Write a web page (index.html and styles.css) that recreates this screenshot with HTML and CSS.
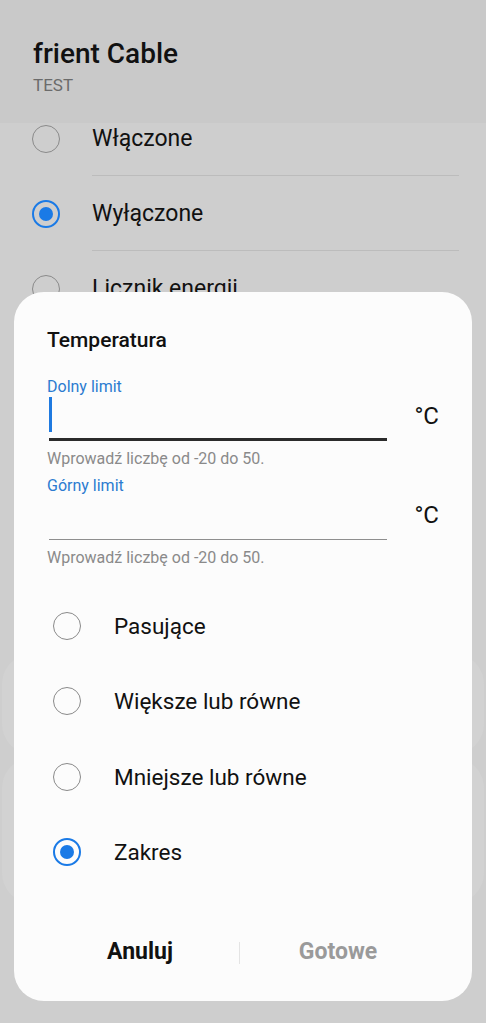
FILE: index.html
```html
<!DOCTYPE html>
<html lang="pl">
<head>
  <meta charset="UTF-8">
  <meta name="viewport" content="width=device-width, initial-scale=1.0">
  <title>frient Cable</title>
  <link rel="stylesheet" href="styles.css">
</head>
<body>
  <div class="screen">
    <div class="header">
      <h1>frient Cable</h1>
      <div class="subtitle">TEST</div>
    </div>

    <div class="list">
      <div class="row">
        <span class="radio"></span>
        <div class="row-label">Włączone</div>
      </div>
      <div class="row">
        <span class="radio checked"></span>
        <div class="row-label">Wyłączone</div>
      </div>
      <div class="row">
        <span class="radio"></span>
        <div class="row-label last">Licznik energii</div>
      </div>
    </div>

    <div class="bg-cards">
      <div class="bg-card first"></div>
      <div class="bg-card second"></div>
    </div>

    <div class="dialog">
      <h2>Temperatura</h2>

      <div class="field">
        <label class="field-label">Dolny limit</label>
        <div class="field-row">
          <div class="field-input focused"><span class="cursor"></span></div>
          <span class="unit">°C</span>
        </div>
        <div class="hint">Wprowadź liczbę od -20 do 50.</div>
      </div>

      <div class="field">
        <label class="field-label">Górny limit</label>
        <div class="field-row">
          <div class="field-input"></div>
          <span class="unit">°C</span>
        </div>
        <div class="hint">Wprowadź liczbę od -20 do 50.</div>
      </div>

      <div class="options">
        <div class="option"><span class="radio"></span><span>Pasujące</span></div>
        <div class="option"><span class="radio"></span><span>Większe lub równe</span></div>
        <div class="option"><span class="radio"></span><span>Mniejsze lub równe</span></div>
        <div class="option"><span class="radio checked"></span><span>Zakres</span></div>
      </div>

      <div class="actions">
        <button class="btn">Anuluj</button>
        <span class="sep"></span>
        <button class="btn disabled">Gotowe</button>
      </div>
    </div>
  </div>
</body>
</html>
```

FILE: styles.css
```css
body {
  margin: 0;
  font-family: Roboto, "Noto Sans", Arial, sans-serif;
  background-color: #cecece;
  color: #111;
}
.screen {
  position: relative;
  width: 486px;
  height: 1023px;
  overflow: hidden;
  background-color: #cecece;
}
.header {
  position: relative;
  z-index: 1;
  height: 123px;
  box-sizing: border-box;
  padding: 37px 33px 0;
  background-color: #c9c9c9;
}
.header h1 {
  margin: 0;
  font-size: 28px;
  line-height: 34px;
  font-weight: 500;
  color: #111;
}
.subtitle {
  font-size: 17px;
  line-height: 20px;
  color: #6b6b6b;
  margin-top: 4px;
}
.list {
  margin-top: -22px;
  padding: 0 27px 0 32px;
}
.row {
  display: flex;
  align-items: center;
  height: 75px;
}
.row-label {
  flex: 1;
  align-self: stretch;
  display: flex;
  align-items: center;
  margin-left: 32px;
  font-size: 23px;
  border-bottom: 1px solid #bcbcbc;
}
.row-label.last {
  border-bottom: none;
}
.radio {
  flex: none;
  width: 28px;
  height: 28px;
  box-sizing: border-box;
  border: 1.5px solid #8a8a8a;
  border-radius: 50%;
  display: flex;
  align-items: center;
  justify-content: center;
}
.radio.checked {
  border: 2px solid #1a7ae6;
}
.radio.checked::after {
  content: "";
  width: 14px;
  height: 14px;
  border-radius: 50%;
  background-color: #1a7ae6;
}
.bg-cards {
  display: flex;
  flex-direction: column;
  gap: 4px;
  margin-top: 328px;
  padding: 0 2px;
}
.bg-card {
  background-color: #d2d2d2;
  border-radius: 30px;
}
.bg-card.first {
  height: 100px;
}
.bg-card.second {
  height: 145px;
}

/* dialog */
.dialog {
  position: absolute;
  left: 14px;
  top: 292px;
  width: 458px;
  height: 709px;
  box-sizing: border-box;
  padding: 36px 33px 0;
  background-color: #fcfcfc;
  border-radius: 30px;
  z-index: 2;
}
.dialog h2 {
  margin: 0 0 24.5px;
  font-size: 21px;
  line-height: 24px;
  font-weight: 500;
  color: #111;
}
.field {
  margin-bottom: 7.5px;
}
.field-label {
  display: block;
  font-size: 16px;
  line-height: 20px;
  color: #2b7bd0;
}
.field-row {
  display: flex;
  align-items: center;
}
.field-input {
  flex: 0 0 338px;
  margin-left: 2px;
  height: 44.5px;
  box-sizing: border-box;
  border-bottom: 1px solid #8e8e8e;
}
.field-input.focused {
  border-bottom: 3px solid #2b2b2b;
}
.cursor {
  display: block;
  width: 2.5px;
  height: 35px;
  margin-top: 0.5px;
  background-color: #1f7ae0;
}
.unit {
  margin-left: auto;
  margin-bottom: 6px;
  font-size: 24px;
  line-height: 28px;
  color: #111;
}
.hint {
  margin-top: 9px;
  font-size: 16px;
  line-height: 18px;
  color: #8a8a8a;
}
.options {
  margin-top: 21px;
  padding-left: 6px;
}
.option {
  display: flex;
  align-items: center;
  gap: 33px;
  height: 75.5px;
  font-size: 22.5px;
}
.actions {
  display: flex;
  align-items: center;
  margin: 35px 0 0 -5.5px;
  width: 395px;
  height: 52px;
}
.btn {
  flex: 1;
  background: none;
  border: none;
  padding: 0;
  font-family: inherit;
  font-size: 23px;
  font-weight: 700;
  color: #111;
}
.btn.disabled {
  color: #9a9a9a;
}
.sep {
  width: 1px;
  height: 22px;
  margin-top: 4px;
  background-color: #e4e4e4;
}
```
